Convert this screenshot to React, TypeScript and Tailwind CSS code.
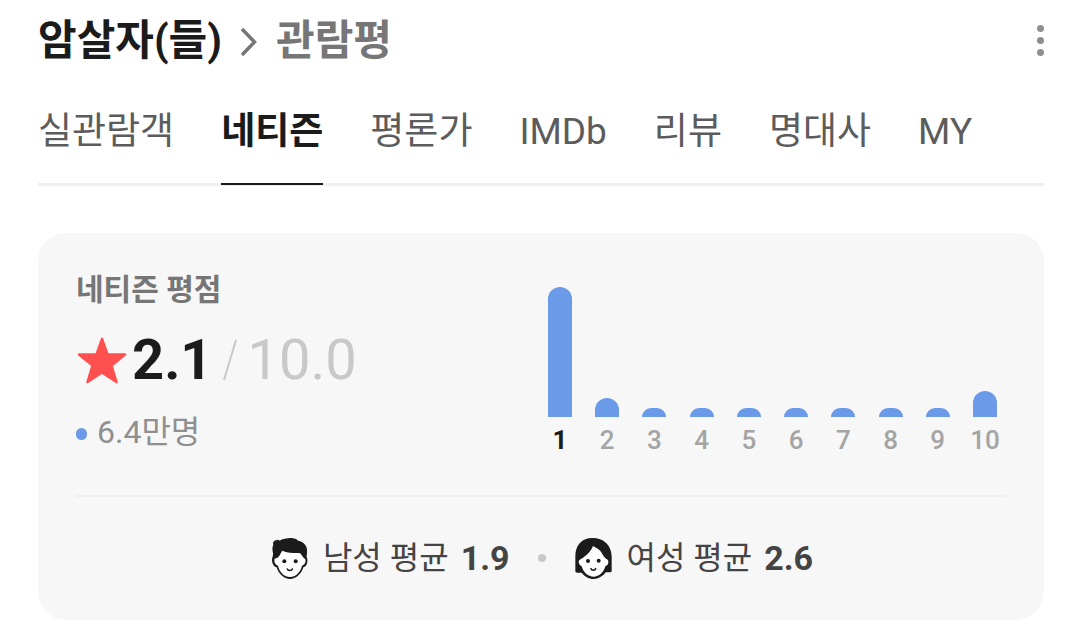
const TABS = ['실관람객', '네티즌', '평론가', 'IMDb', '리뷰', '명대사', 'MY']
const ACTIVE_TAB = '네티즌'

// bar heights in px, one for each score
const SCORES = [
  { score: 1, height: 130 },
  { score: 2, height: 19 },
  { score: 3, height: 9 },
  { score: 4, height: 9 },
  { score: 5, height: 9 },
  { score: 6, height: 9 },
  { score: 7, height: 9 },
  { score: 8, height: 9 },
  { score: 9, height: 9 },
  { score: 10, height: 26 },
]
const TOP_SCORE = 1

const MaleIcon = () => (
  <svg viewBox="33 36 111 129" className="h-[43px] w-[37px]" aria-hidden="true">
    <path
      fill="#1b1b1b"
      d="M36 104C37 96 40 91 39 84C37 74 36 66 40 61C37 53 42 45 50 46C53 43 57 45 59 47C66 42 76 41 84 40C97 37 109 40 114 47C128 49 139 58 141 73C142 82 140 90 140 96C143 102 143 112 140 118C138 123 134 126 130 127C124 147 108 162 90 162C72 162 56 147 50 127C42 125 36 116 36 104Z"
    />
    <path
      fill="#fff"
      d="M43 103C42 112 46 120 54 122C58 141 73 156 90 156C107 156 122 141 126 122C134 120 138 112 136 103C133 100 129 97 125 91C123 85 120 83 113 84C97 84 79 83 67 77C63 82 61 89 57 94C53 100 46 99 43 103Z"
    />
    <circle cx="73" cy="109" r="6" fill="#1b1b1b" />
    <circle cx="107" cy="109" r="6" fill="#1b1b1b" />
    <path d="M82 132C84 138 95 138 97 132" fill="none" stroke="#1b1b1b" strokeWidth="5" strokeLinecap="round" />
  </svg>
)

const FemaleIcon = () => (
  <svg viewBox="47 36 111 129" className="h-[43px] w-[37px]" aria-hidden="true">
    <path
      fill="#1b1b1b"
      d="M48 139V94C48 60 68 39 99 39C133 39 156 60 157 94V138Q157 142 152 142H139C131 154 117 162 103 162C88 162 75 154 67 143H54Q48 143 48 139Z"
    />
    <path
      fill="#fff"
      d="M58 109C58 117 62 122 67 124C72 143 86 155 103 155C119 155 133 143 138 124C144 122 148 117 147 109C146 105 144 103 141 102C134 96 130 89 127 83C121 73 111 69 101 63C96 76 86 88 71 98C66 101 60 103 58 109Z"
    />
    <circle cx="86" cy="108" r="6" fill="#1b1b1b" />
    <circle cx="118" cy="107" r="6" fill="#1b1b1b" />
    <path d="M95 131C97 137 107 137 109 131" fill="none" stroke="#1b1b1b" strokeWidth="5" strokeLinecap="round" />
  </svg>
)

const Header = () => (
  <header className="flex h-20 items-center justify-between">
    <h1 className="flex items-center pt-0.5 text-[42px] leading-[60px] font-bold">
      <a href="#movie" className="text-[#1b1b1b]">
        암살자(들)
      </a>
      <svg viewBox="0 0 18 30" className="mr-[18px] ml-[18px] h-[30px] w-[18px]" aria-hidden="true">
        <path d="M2 3L14.500 16L2 29" fill="none" stroke="#767676" strokeWidth="3.500" />
      </svg>
      <a href="#reviews" className="text-[#767676]">
        관람평
      </a>
    </h1>

    <button type="button" aria-label="더보기" className="flex flex-col gap-[5px]">
      <span className="size-[7px] rounded-full bg-[#8f8f8f]" />
      <span className="size-[7px] rounded-full bg-[#8f8f8f]" />
      <span className="size-[7px] rounded-full bg-[#8f8f8f]" />
    </button>
  </header>
)

const Tabs = () => (
  <nav className="flex gap-[47px] bg-[linear-gradient(#efefef,#efefef)] bg-[length:100%_3px] bg-bottom bg-no-repeat pb-px text-[37px] leading-[52px]">
    {TABS.map((tab) => (
      <a
        key={tab}
        href={`#${tab}`}
        aria-current={tab === ACTIVE_TAB ? 'page' : undefined}
        className={
          tab === ACTIVE_TAB
            ? 'border-b-2 border-[#1b1b1b] pt-[26px] pb-[25px] font-bold text-[#1b1b1b]'
            : 'border-b-2 border-transparent pt-[26px] pb-[25px] text-[#5c5c5c]'
        }
      >
        {tab}
      </a>
    ))}
  </nav>
)

const ScoreSummary = () => (
  <div className="flex flex-col">
    <h2 className="text-[30px] leading-10 font-bold text-[#767676]">네티즌 평점</h2>

    <p className="mt-4 flex h-[68px] items-center text-[56px] leading-[68px]">
      <svg viewBox="0 0 50 47" className="mr-[5px] ml-px h-[47px] w-[50px]" aria-hidden="true">
        <path
          d="M25 2L30.500 17.500H48L34.500 28.500L39.500 45L25 35.500L10.500 45L15.500 28.500L2 17.500H19.500Z"
          fill="#ff5050"
          stroke="#ff5050"
          strokeWidth="2.500"
          strokeLinejoin="round"
        />
      </svg>
      <span className="font-bold text-[#1b1b1b]">2.1</span>
      <svg viewBox="0 0 16 42" className="mr-[10px] ml-[9px] h-[42px] w-4" aria-hidden="true">
        <path d="M2 41L14 1" stroke="#c8c8c8" strokeWidth="2" />
      </svg>
      <span className="text-[#c8c8c8]">10.0</span>
    </p>

    <p className="mt-4 flex items-center gap-[10px] text-[32px] leading-[44px] text-[#8f8f8f]">
      <span className="mt-1 h-3 w-[11px] rounded-full bg-[#6b9ae8]" />
      6.4만명
    </p>
  </div>
)

const ScoreChart = () => (
  <ol className="mr-[9px] flex w-[449px] items-end justify-between text-[26px] leading-[30px] font-medium text-[#a4a4a4]">
    {SCORES.map(({ score, height }) => (
      <li key={score} className="flex w-6 flex-col items-center gap-2">
        <span className="w-6 rounded-t-[12px] bg-[#6b9ae8]" style={{ height }} />
        <span className={score === TOP_SCORE ? 'font-bold text-[#1b1b1b]' : undefined}>{score}</span>
      </li>
    ))}
  </ol>
)

const GenderAverages = () => (
  <div className="flex items-center justify-center pt-[39px] pl-0.5 text-[32px] leading-[44px] text-[#444]">
    <p className="flex items-center">
      <MaleIcon />
      <span className="ml-[15px]">남성 평균</span>
      <strong className="ml-3 text-[34px] font-bold">1.9</strong>
    </p>
    <span className="mr-[29px] ml-7 size-2 rounded-full bg-[#c8c8c8]" />
    <p className="flex items-center">
      <FemaleIcon />
      <span className="ml-[15px]">여성 평균</span>
      <strong className="ml-3 text-[34px] font-bold">2.6</strong>
    </p>
  </div>
)

export default function App() {
  return (
    <main className="bg-white pr-9 pb-2 pl-[38px] font-[Roboto,'Noto_Sans_CJK_KR',sans-serif]">
      <Header />
      <Tabs />

      <section className="mt-[47px] rounded-[28px] bg-[#f7f7f7] px-[38px] pt-[37px] pb-10">
        <div className="flex items-start justify-between border-b-2 border-[#efefef] pb-10">
          <ScoreSummary />
          <div className="pt-[17px]">
            <ScoreChart />
          </div>
        </div>
        <GenderAverages />
      </section>
    </main>
  )
}
